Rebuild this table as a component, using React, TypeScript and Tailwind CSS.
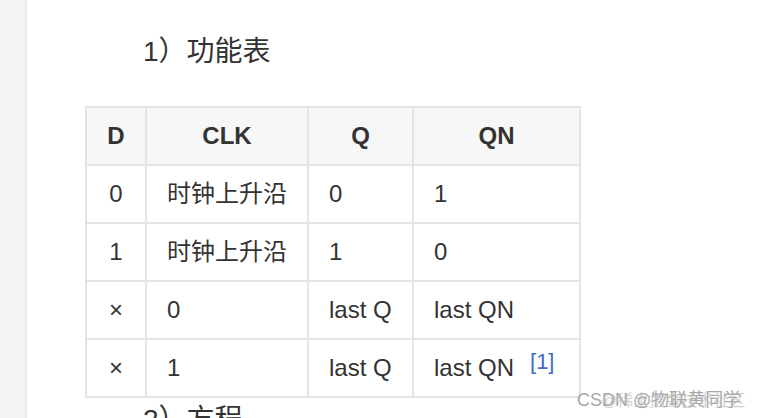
import React from "react";

const Rows = [
  { d: "0", clk: "时钟上升沿", q: "0", qn: "1" },
  { d: "1", clk: "时钟上升沿", q: "1", qn: "0" },
  { d: "×", clk: "0", q: "last Q", qn: "last QN" },
  { d: "×", clk: "1", q: "last Q", qn: "last QN", note: "[1]" },
];

const font = { fontFamily: '"Liberation Sans", Arial, "Noto Sans CJK SC", sans-serif' };

export default function App() {
  return (
    <div
      className="relative w-[758px] h-[418px] overflow-hidden bg-white flex text-[#333]"
      style={font}
    >
      <div className="w-[27px] shrink-0 bg-[#f4f4f4] border-r-2 border-[#e8e8e8]"></div>
      <div className="flex flex-col pl-[58px]">
        <h2 className="mt-[36px] pl-[58px] text-[28px] leading-[32px] font-normal">1）功能表</h2>
        <table className="mt-[38px] w-[494px] table-fixed border-collapse border-2 border-[#e4e4e4] text-[24px]">
          <colgroup>
            <col className="w-[60px]" />
            <col className="w-[162px]" />
            <col className="w-[105px]" />
            <col className="w-[167px]" />
          </colgroup>
          <thead>
            <tr className="h-[58px] bg-[#f7f7f7] font-bold">
              <th className="border-2 border-[#e4e4e4] text-center">D</th>
              <th className="border-2 border-[#e4e4e4] text-center">CLK</th>
              <th className="border-2 border-[#e4e4e4] text-center">Q</th>
              <th className="border-2 border-[#e4e4e4] text-center">QN</th>
            </tr>
          </thead>
          <tbody>
            {Rows.map((row, index) => {
              return (
                <tr key={index} className="h-[58px]">
                  <td className="border-2 border-[#e4e4e4] text-center">{row.d}</td>
                  <td className="border-2 border-[#e4e4e4] pl-[20px]">{row.clk}</td>
                  <td className="border-2 border-[#e4e4e4] pl-[20px]">{row.q}</td>
                  <td className="border-2 border-[#e4e4e4] pl-[20px] whitespace-nowrap">
                    {row.qn}
                    {row.note && (
                      <sup className="ml-[16px] text-[22px] text-[#3b6ec4] relative -top-[7px]">{row.note}</sup>
                    )}
                  </td>
                </tr>
              );
            })}
          </tbody>
        </table>
        <h2 className="mt-[6px] pl-[58px] text-[28px] leading-[32px] font-normal">2）方程</h2>
      </div>
      <div className="absolute left-[577px] top-[389px] text-[18px] leading-[22px] text-[#a8a8a8] whitespace-nowrap">
        <span>CSDN @物联黄同学</span>
        <span className="absolute left-[24px] top-[2px] text-[16px] leading-[20px] text-[#b4b4b4] opacity-60">@稀土掘金技术社区</span>
      </div>
    </div>
  );
}
